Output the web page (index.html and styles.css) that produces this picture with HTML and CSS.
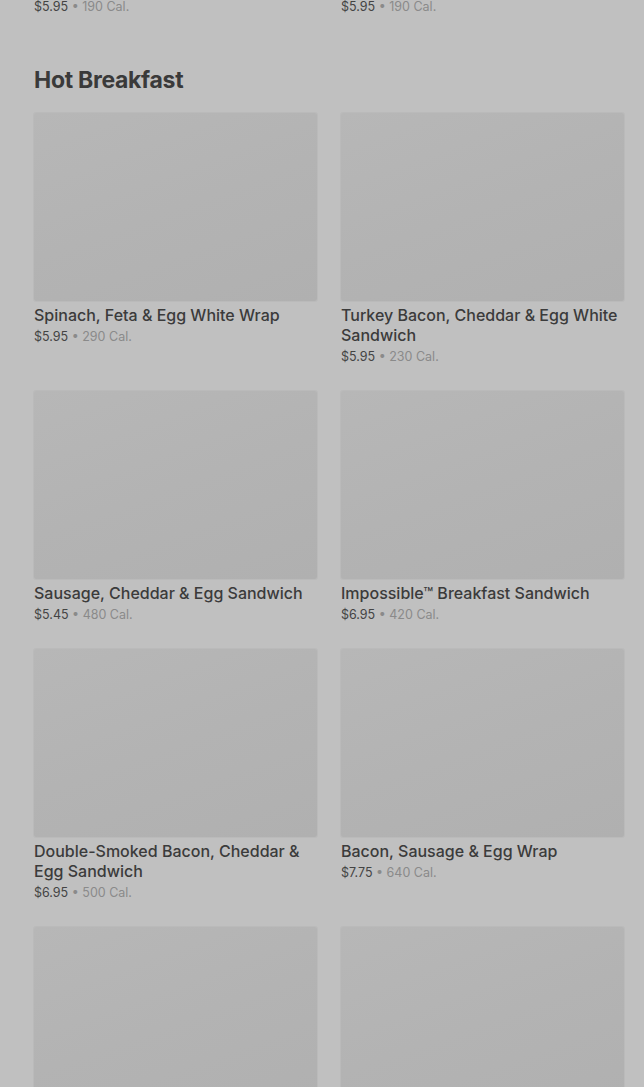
FILE: index.html
```html
<!DOCTYPE html>
<html lang="en">
<head>
    <meta charset="UTF-8">
    <meta name="viewport" content="width=device-width, initial-scale=1.0">
    <title>Menu - Hot Breakfast</title>
    <link rel="stylesheet" href="styles.css">
</head>
<body>
    <main class="menu">
        <div class="grid tail">
            <p class="price"><span class="cost">$5.95</span> • 190 Cal.</p>
            <p class="price"><span class="cost">$5.95</span> • 190 Cal.</p>
        </div>

        <section class="category">
            <h2>Hot Breakfast</h2>
            <div class="grid">
                <div class="item">
                    <div class="thumb"></div>
                    <h3>Spinach, Feta &amp; Egg White Wrap</h3>
                    <p class="price"><span class="cost">$5.95</span> • 290 Cal.</p>
                </div>
                <div class="item">
                    <div class="thumb"></div>
                    <h3>Turkey Bacon, Cheddar &amp; Egg White Sandwich</h3>
                    <p class="price"><span class="cost">$5.95</span> • 230 Cal.</p>
                </div>
                <div class="item">
                    <div class="thumb"></div>
                    <h3>Sausage, Cheddar &amp; Egg Sandwich</h3>
                    <p class="price"><span class="cost">$5.45</span> • 480 Cal.</p>
                </div>
                <div class="item">
                    <div class="thumb"></div>
                    <h3>Impossible™ Breakfast Sandwich</h3>
                    <p class="price"><span class="cost">$6.95</span> • 420 Cal.</p>
                </div>
                <div class="item">
                    <div class="thumb"></div>
                    <h3>Double-Smoked Bacon, Cheddar &amp; Egg Sandwich</h3>
                    <p class="price"><span class="cost">$6.95</span> • 500 Cal.</p>
                </div>
                <div class="item">
                    <div class="thumb"></div>
                    <h3>Bacon, Sausage &amp; Egg Wrap</h3>
                    <p class="price"><span class="cost">$7.75</span> • 640 Cal.</p>
                </div>
                <div class="item">
                    <div class="thumb"></div>
                </div>
                <div class="item">
                    <div class="thumb"></div>
                </div>
            </div>
        </section>
    </main>
</body>
</html>
```

FILE: styles.css
```css
body {
    margin: 0;
    padding: 0;
    background-color: #c0c0c0;
    color: #3b3b3b;
    font-family: Inter, "Noto Sans", Arial, sans-serif;
    overflow: hidden;
}
.menu {
    padding: 0 20px 0 34px;
}
.grid {
    display: grid;
    grid-template-columns: 1fr 1fr;
    column-gap: 24px;
    row-gap: 24px;
}
.tail {
    margin-top: -4px;
}
.category h2 {
    margin: 48px 0 19px;
    font-size: 23px;
    line-height: 28px;
    font-weight: 700;
    letter-spacing: -0.3px;
    color: #3a3a3a;
}
.thumb {
    height: 188px;
    border-radius: 2px;
    background: linear-gradient(160deg, #b7b7b7 0%, #b3b3b3 50%, #b0b0b0 100%);
    box-shadow: 0 0 0 1px #bababa;
}
.item h3 {
    margin: 4px 0 0;
    font-size: 16px;
    line-height: 20px;
    font-weight: 500;
    color: #3b3b3b;
}
.price {
    margin: 0;
    font-size: 12.5px;
    line-height: 22px;
    color: #8a8a8a;
}
.item .price {
    margin-top: 2px;
    line-height: 20px;
}
.cost {
    color: #444;
}
```
